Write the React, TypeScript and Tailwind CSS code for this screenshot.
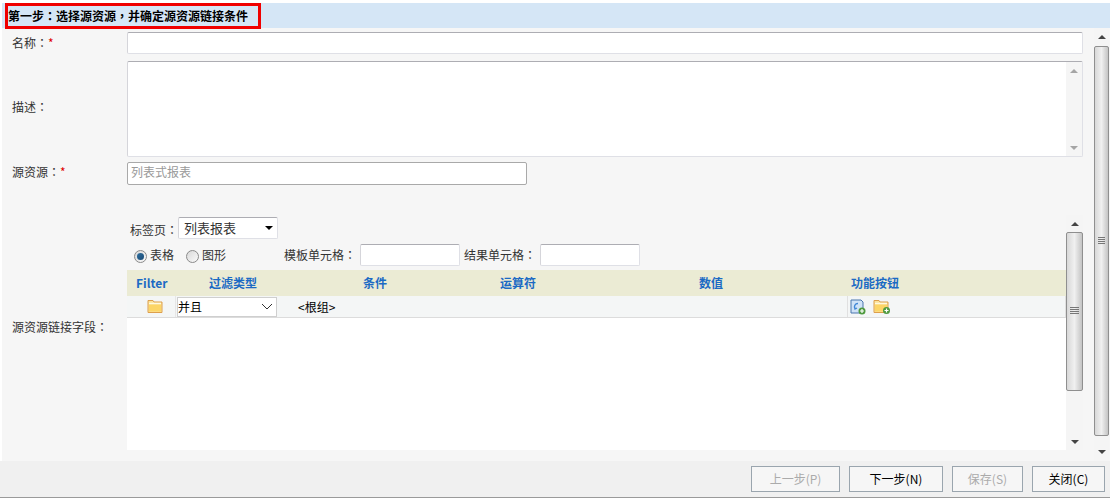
import React from 'react';

const inputBorder = 'border border-[#dfe0e6] border-t-[#adadb3] border-l-[#d5d5da] rounded-[2px] bg-white';

// full-width punctuation sits centred in the reference, the TC face does that
function Punct({ children }: { children: string }) {
  return <span className="font-['Noto_Sans_CJK_TC']">{children}</span>;
}

function Scrollbar({ thumbH, gripY, btn, dim }: { thumbH: number; gripY: number; btn: number; dim?: boolean }) {
  return (
    <div className="flex flex-col h-full w-full items-center bg-[#f5f5f5]">
      <div className="flex items-center justify-center w-full shrink-0" style={{ height: btn }}>
        <div className={`w-0 h-0 border-x-[4px] border-x-transparent border-b-[4px] ${dim ? 'border-b-[#a5a5a5]' : 'border-b-[#444]'}`} />
      </div>
      {!dim && (
        <div
          className="relative w-full shrink-0 rounded-[2px] border border-[#8f8f8f] bg-gradient-to-r from-[#d8d8d8] via-[#f0f0f0] to-[#c4c4c4]"
          style={{ height: thumbH }}
        >
          <div className="absolute left-[3px] right-[3px] flex flex-col gap-px" style={{ top: gripY }}>
            <div className="h-px bg-[#777]" />
            <div className="h-px bg-[#777]" />
            <div className="h-px bg-[#777]" />
            <div className="h-px bg-[#777]" />
          </div>
        </div>
      )}
      <div className="flex-1" />
      <div className="flex items-center justify-center w-full shrink-0" style={{ height: btn }}>
        <div className={`w-0 h-0 border-x-[4px] border-x-transparent border-t-[4px] ${dim ? 'border-t-[#a5a5a5]' : 'border-t-[#444]'}`} />
      </div>
    </div>
  );
}

function FolderIcon({ plus }: { plus?: boolean }) {
  return (
    <svg width="17" height="15" viewBox="0 0 17 15">
      <path d="M1 13.500V1.500h5l1 1.500h8v10.500z" fill="#fbe39a" stroke="#dd9f4c" />
      <rect x="2" y="3.800" width="12" height="1.600" fill="#fff8de" />
      <rect x="2" y="5.500" width="12" height="7" fill="#fcd566" />
      {plus && (
        <g>
          <circle cx="13.500" cy="11.500" r="3.500" fill="#4f9a3f" />
          <path d="M11.500 11.500h4M13.500 9.500v4" stroke="#fff" strokeWidth="1.200" />
        </g>
      )}
    </svg>
  );
}

function FilterIcon() {
  return (
    <svg width="16" height="16" viewBox="0 0 16 16">
      <path d="M1 1h10l2 2v11H1z" fill="#cfe2f7" stroke="#4a77ad" />
      <path d="M8 4.500a3.500 3.500 0 0 0-3 5.500M4.500 7.500l.5 2.500 2-1" fill="none" stroke="#3f86d6" strokeWidth="1.300" />
      <circle cx="12" cy="12" r="3.500" fill="#4f9a3f" />
      <path d="M10 12h4M12 10v4" stroke="#fff" strokeWidth="1.200" />
    </svg>
  );
}

function Radio({ checked }: { checked?: boolean }) {
  return (
    <span className="flex items-center justify-center w-[13px] h-[13px] mt-[2px] rounded-full border border-[#8a8a8a] bg-gradient-to-br from-[#d9d9d9] to-[#fafafa]">
      {checked && <span className="w-[7px] h-[7px] rounded-full bg-gradient-to-br from-[#2f6f9f] to-[#1a4a75]" />}
    </span>
  );
}

function FormLabel({ text, required, lift = 0 }: { text: string; required?: boolean; lift?: number }) {
  return (
    <div className="w-[127px] shrink-0 pl-[10px] text-[12px] text-[#333]" style={{ marginTop: -lift }}>
      {text}<Punct>：</Punct>{required && <span className="text-[#e00000]">*</span>}
    </div>
  );
}

function FooterButton({ label, width, disabled }: { label: string; width: number; disabled?: boolean }) {
  return (
    <button
      className={`h-[26px] border border-[#9aa5ae] bg-[#f6f6f6] text-[12px] ${disabled ? 'text-[#ababab]' : 'text-black'}`}
      style={{ width }}
    >
      {label}
    </button>
  );
}

const COLUMNS = ['Filter', '过滤类型', '条件', '运算符', '数值', '功能按钮'];

export default function App() {
  return (
    <div
      className="w-[1110px] h-[500px] bg-white pt-[3px] pl-[2px] flex flex-col overflow-hidden"
      style={{ fontFamily: '"Noto Sans CJK SC", "Liberation Sans", sans-serif' }}
    >
      {/* Step title */}
      <div className="relative h-[25px] shrink-0 bg-[#d5e6f6] flex items-center pl-[6px] text-[12px] font-bold text-black">
        <span>第一步<Punct>：</Punct>选择源资源<Punct>，</Punct>并确定源资源链接条件</span>
        <div className="absolute left-[3px] top-0 w-[256px] h-[26px] border-[3px] border-[#f00000]" />
      </div>

      <div className="flex-1 flex min-h-0 bg-[#f6f6f6]">
        {/* Form */}
        <div className="flex-1 flex flex-col pt-[4px] min-w-0">
          <div className="flex items-center h-[22px]">
            <FormLabel text="名称" required />
            <div className={`w-[956px] h-[22px] -ml-[2px] ${inputBorder}`} />
          </div>

          <div className="flex items-center h-[96px] mt-[7px]">
            <FormLabel text="描述" lift={4} />
            <div className={`flex w-[956px] h-[96px] -ml-[2px] ${inputBorder}`}>
              <div className="flex-1" />
              <div className="w-[16px] h-full">
                <Scrollbar thumbH={0} gripY={0} btn={17} dim />
              </div>
            </div>
          </div>

          <div className="flex items-center h-[23px] mt-[5px]">
            <FormLabel text="源资源" required lift={4} />
            <div className="w-[400px] h-[23px] -ml-[2px] pb-[3px] border border-[#a9a9a9] rounded-[2px] bg-white pl-[3px] flex items-center text-[12px] text-[#999]">
              列表式报表
            </div>
          </div>

          <div className="flex items-center h-[244px] mt-[21px]">
            <FormLabel text="源资源链接字段" lift={2} />
            <div className="flex w-[956px] h-[244px] -ml-[2px]">
              <div className="flex-1 flex flex-col min-w-0 pt-[11px]">
                <div className="flex items-center h-[22px] pl-[3px] text-[12px] text-[#333]">
                  <span className="pt-[3px]">标签页<Punct>：</Punct></span>
                  <div className={`w-[100px] h-[22px] flex items-center justify-between pl-[5px] pr-[4px] text-[13px] ${inputBorder}`}>
                    <span>列表报表</span>
                    <span className="w-0 h-0 border-x-[4px] border-x-transparent border-t-[4px] border-t-black" />
                  </div>
                </div>

                <div className="flex items-center h-[22px] mt-[5px] pl-[7px] text-[12px] text-[#333]">
                  <Radio checked />
                  <span className="ml-[3px]">表格</span>
                  <span className="ml-[12px]"><Radio /></span>
                  <span className="ml-[3px]">图形</span>
                  <span className="ml-[58px]">模板单元格<Punct>：</Punct></span>
                  <div className={`w-[100px] h-[22px] ml-[4px] ${inputBorder}`} />
                  <span className="ml-[4px]">结果单元格<Punct>：</Punct></span>
                  <div className={`w-[100px] h-[22px] ml-[4px] ${inputBorder}`} />
                </div>

                {/* Filter table */}
                <div className="grid grid-cols-[73px_154px_137px_199px_152px_1fr] items-center h-[26px] mt-[4px] pl-[9px] bg-[#ebebd4] text-[12px] font-bold text-[#1b6ac4]">
                  {COLUMNS.map(c => (
                    <div key={c}>{c}</div>
                  ))}
                </div>
                <div className="flex items-center h-[22px] bg-[#f4f6f6] border-b border-[#dcdcdc] text-[12px] text-black">
                  <div className="w-[49px] h-full flex items-center justify-center pl-[8px] border-r border-[#e6e6e6]">
                    <FolderIcon />
                  </div>
                  <div className="w-[100px] h-[20px] ml-px flex items-center justify-between pr-[3px] bg-white border border-[#cfcfcf]">
                    <span>并且</span>
                    <svg width="12" height="7" viewBox="0 0 12 7">
                      <path d="M1 1l5 5 5-5" fill="none" stroke="#333" strokeWidth="1" />
                    </svg>
                  </div>
                  <div className="ml-[21px] w-[549px]">&lt;根组&gt;</div>
                  <div className="h-full flex-1 flex items-center gap-[7px] pl-[2px] border-l border-[#e0e0e0] border-r">
                    <FilterIcon />
                    <FolderIcon plus />
                  </div>
                </div>
                <div className="flex-1 bg-white" />
              </div>
              <div className="w-[17px] h-[235px] mt-[9px] shrink-0">
                <Scrollbar thumbH={159} gripY={74} btn={17} />
              </div>
            </div>
          </div>
        </div>

        {/* Page scrollbar */}
        <div className="w-[15px] ml-[10px] mr-[1px] shrink-0">
          <Scrollbar thumbH={390} gripY={190} btn={18} />
        </div>
      </div>

      {/* Footer */}
      <div className="h-[37px] shrink-0 -ml-[2px] bg-[#f0f0f0] border-b-[1px] border-[#9a9a9a] flex items-center justify-end gap-[9px] pr-[5px] pb-[1px]">
        <FooterButton label="上一步(P)" width={89} disabled />
        <FooterButton label="下一步(N)" width={94} />
        <FooterButton label="保存(S)" width={71} disabled />
        <FooterButton label="关闭(C)" width={73} />
      </div>
      <div className="h-[2px] shrink-0 -ml-[2px] bg-white" />
    </div>
  );
}
